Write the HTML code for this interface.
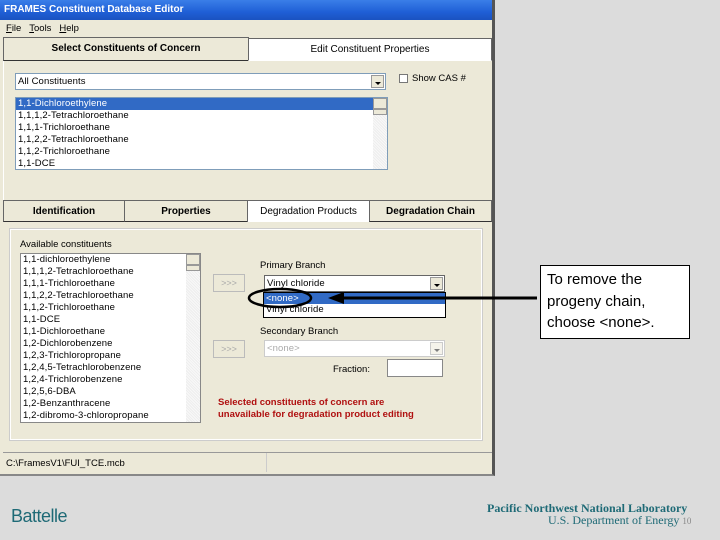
<!DOCTYPE html>
<html><head><meta charset="utf-8"><style>
*{margin:0;padding:0;box-sizing:border-box}
body{width:720px;height:540px;background:#dcdcdc;position:relative;overflow:hidden;font-family:"Liberation Sans",sans-serif;font-size:10px;color:#000}
.a{position:absolute}
.win{left:0;top:0;width:495px;height:476px;background:#ece9d8;border-right:3px solid #555;border-bottom:2px solid #888}
.title{left:0;top:0;width:492px;height:20px;background:linear-gradient(#3a7ee8,#1f5fd6 60%,#1a52c0);color:#fff;font-weight:bold;font-size:10px;padding:4px 4px}
.tab{background:#ece9d8;border:1px solid #666;border-bottom:1px solid #333;text-align:center;font-weight:bold;font-size:10px;padding-top:5px}
.tab.sel{background:#fff;font-weight:normal;border-bottom:none}
.box{background:#fff;border:1px solid #7f9db9}
.row{height:12px;line-height:12px;padding-left:2px;font-size:9.5px;white-space:nowrap;letter-spacing:0.1px}
.dd{position:absolute;right:1px;top:1px;width:13px;background:#ece9d8;border:1px solid #999}
.dd:after{content:"";position:absolute;left:3px;top:6px;border:3px solid transparent;border-top:3px solid #000}
.sb{position:absolute;right:0;top:0;bottom:0;width:14px;background:repeating-linear-gradient(45deg,#eee 0 1px,#f8f8f8 1px 2px)}
.btn{background:#ece9d8;border:1px solid #bbb;color:#aaa;font-size:9px;text-align:center;line-height:16px}
</style></head><body>
<div class="a win"></div>
<div class="a title">FRAMES Constituent Database Editor</div>
<div class="a" style="left:6px;top:23px;font-size:9.5px"><u>F</u>ile&nbsp;&nbsp;&nbsp;<u>T</u>ools&nbsp;&nbsp;&nbsp;<u>H</u>elp</div>
<div class="a" style="left:3px;top:60px;width:489px;height:140px;border-left:1px solid #fff;background:#ece9d8"></div>
<div class="a tab" style="left:3px;top:37px;width:246px;height:24px">Select Constituents of Concern</div>
<div class="a tab sel" style="left:248px;top:38px;width:244px;height:23px;border-bottom:none;background:#fff;border-bottom:1px solid #fff">Edit Constituent Properties</div>
<div class="a box" style="left:15px;top:73px;width:371px;height:17px"><div class="row" style="padding-top:2px">All Constituents</div><div class="dd" style="height:13px"></div></div>
<div class="a" style="left:399px;top:74px;width:9px;height:9px;border:1px solid #777;background:#fff"></div>
<div class="a" style="left:412px;top:73px;font-size:9.5px">Show CAS #</div>
<div class="a box" style="left:15px;top:97px;width:373px;height:73px;overflow:hidden">
<div class="row" style="background:#316ac5;color:#fff;width:357px">1,1-Dichloroethylene</div>
<div class="row">1,1,1,2-Tetrachloroethane</div><div class="row">1,1,1-Trichloroethane</div><div class="row">1,1,2,2-Tetrachloroethane</div><div class="row">1,1,2-Trichloroethane</div><div class="row">1,1-DCE</div>
<div class="sb"><div style="height:11px;border:1px solid #999;background:#ece9d8"></div><div style="height:6px;border:1px solid #999;background:#ece9d8"></div></div></div>
<div class="a tab" style="left:3px;top:200px;width:122px;height:22px">Identification</div>
<div class="a tab" style="left:124px;top:200px;width:124px;height:22px">Properties</div>
<div class="a tab sel" style="left:247px;top:200px;width:123px;height:22px">Degradation Products</div>
<div class="a tab" style="left:369px;top:200px;width:123px;height:22px">Degradation Chain</div>
<div class="a" style="left:10px;top:229px;width:472px;height:211px;border:1px solid #fff;outline:1px solid #ccc"></div>
<div class="a" style="left:20px;top:239px;font-size:9.5px">Available constituents</div>
<div class="a box" style="left:20px;top:253px;width:181px;height:170px;overflow:hidden;border-color:#888">
<div class="row">1,1-dichloroethylene</div><div class="row">1,1,1,2-Tetrachloroethane</div><div class="row">1,1,1-Trichloroethane</div><div class="row">1,1,2,2-Tetrachloroethane</div><div class="row">1,1,2-Trichloroethane</div><div class="row">1,1-DCE</div><div class="row">1,1-Dichloroethane</div><div class="row">1,2-Dichlorobenzene</div><div class="row">1,2,3-Trichloropropane</div><div class="row">1,2,4,5-Tetrachlorobenzene</div><div class="row">1,2,4-Trichlorobenzene</div><div class="row">1,2,5,6-DBA</div><div class="row">1,2-Benzanthracene</div><div class="row">1,2-dibromo-3-chloropropane</div>
<div class="sb"><div style="height:11px;border:1px solid #999;background:#ece9d8"></div><div style="height:6px;border:1px solid #999;background:#ece9d8"></div></div></div>
<div class="a btn" style="left:213px;top:274px;width:32px;height:18px">&gt;&gt;&gt;</div>
<div class="a btn" style="left:213px;top:340px;width:32px;height:18px">&gt;&gt;&gt;</div>
<div class="a" style="left:260px;top:260px;font-size:9.5px">Primary Branch</div>
<div class="a box" style="left:264px;top:275px;width:181px;height:17px;border-color:#666"><div class="row" style="padding-top:2px">Vinyl chloride</div><div class="dd" style="height:13px"></div></div>
<div class="a" style="left:263px;top:292px;width:183px;height:26px;background:#fff;border:1px solid #000">
<div class="row" style="background:#316ac5;color:#fff;height:11px;line-height:11px">&lt;none&gt;</div><div class="row">Vinyl chloride</div></div>
<div class="a" style="left:260px;top:326px;font-size:9.5px">Secondary Branch</div>
<div class="a box" style="left:264px;top:340px;width:181px;height:17px;border-color:#ccc"><div class="row" style="padding-top:2px;color:#aaa">&lt;none&gt;</div><div class="dd" style="height:13px;opacity:.5"></div></div>
<div class="a" style="left:333px;top:364px;font-size:9.5px">Fraction:</div>
<div class="a box" style="left:387px;top:359px;width:56px;height:18px;border-color:#888"></div>
<div class="a" style="left:218px;top:397px;color:#b01010;font-weight:bold;font-size:9.5px;line-height:12px">Selected constituents of concern are<br>unavailable for degradation product editing</div>
<div class="a" style="left:3px;top:452px;width:489px;height:21px;border-top:1px solid #999;background:#ece9d8"></div>
<div class="a" style="left:266px;top:453px;width:1px;height:19px;background:#ccc"></div>
<div class="a" style="left:6px;top:458px;font-size:9.5px">C:\FramesV1\FUI_TCE.mcb</div>
<svg class="a" style="left:0;top:0" width="720" height="540">
<ellipse cx="280" cy="298" rx="31" ry="9" fill="none" stroke="#000" stroke-width="2.5"/>
<line x1="340" y1="298" x2="537" y2="298" stroke="#000" stroke-width="3"/>
<polygon points="328,298 344,292 344,304" fill="#000"/>
</svg>
<div class="a" style="left:540px;top:265px;width:150px;height:74px;background:#fff;border:1px solid #000;padding:3px 0 0 6px;font-size:15px;line-height:21.5px">To remove the<br>progeny chain,<br>choose &lt;none&gt;.</div>
<div class="a" style="left:11px;top:506px;font-size:18px;color:#1e6a76;letter-spacing:-0.5px">Battelle</div>
<div class="a" style="left:487px;top:501px;font-size:12px;font-weight:bold;color:#1e6a76;font-family:'Liberation Serif',serif">Pacific Northwest National Laboratory</div>
<div class="a" style="left:548px;top:513px;font-size:12px;color:#1e6a76;font-family:'Liberation Serif',serif">U.S. Department of Energy <span style="font-size:9px;color:#888">10</span></div>
</body></html>
